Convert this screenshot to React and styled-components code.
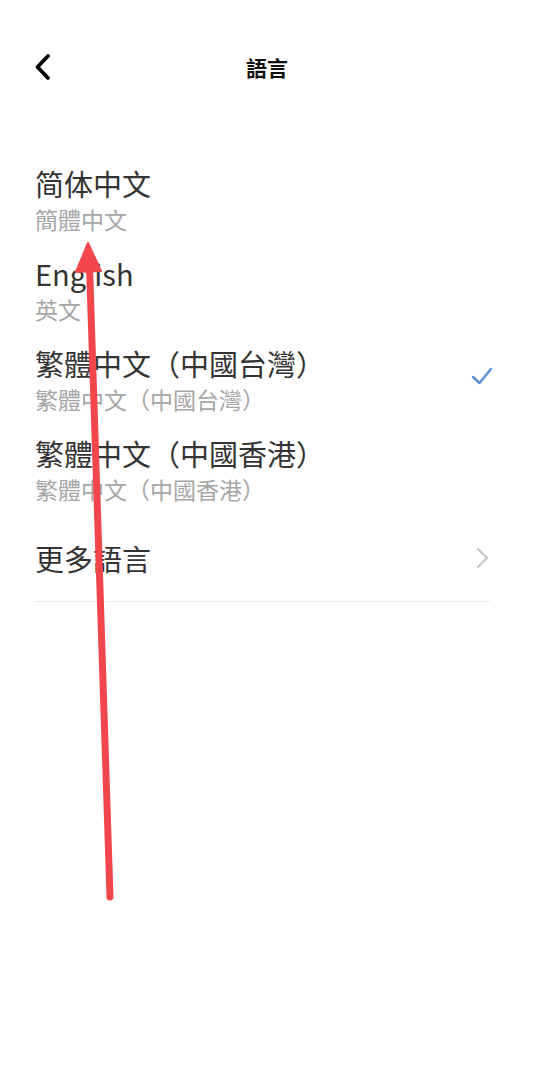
import React from 'react';
import styled, { createGlobalStyle } from 'styled-components';

const GlobalStyle = createGlobalStyle`
  html, body {
    margin: 0;
    padding: 0;
    background: #ffffff;
  }
  body {
    font-family: "Noto Sans CJK TC", "Noto Sans CJK SC", "Noto Sans", sans-serif;
    color: #333;
  }
`;

const Page = styled.div`
  position: relative;
  width: 534px;
  height: 1080px;
  background: #fff;
  overflow: hidden;
`;

const Header = styled.header`
  height: 134px;
  display: flex;
  align-items: center;
  justify-content: center;
  position: relative;
`;

const BackButton = styled.button`
  position: absolute;
  left: 30px;
  top: 50px;
  width: 28px;
  height: 34px;
  padding: 0;
  border: 0;
  background: none;
  cursor: pointer;
`;

const Title = styled.h1`
  margin: 0;
  font-size: 21px;
  line-height: 28px;
  font-weight: 700;
  color: #111;
`;

const List = styled.ul`
  list-style: none;
  margin: 0;
  padding: 20px 0 0;
`;

const Row = styled.li`
  display: flex;
  align-items: center;
  justify-content: space-between;
  margin: 0 44px 0 35px;
  padding: ${(p) => (p.$more ? '0' : '9px 0')};
  height: ${(p) => (p.$more ? '87px' : 'auto')};
  border-bottom: ${(p) => (p.$more ? '1px solid #ececec' : 'none')};
  cursor: pointer;
`;

const Labels = styled.div`
  display: flex;
  flex-direction: column;
`;

const Primary = styled.span`
  font-size: 29px;
  line-height: 40px;
  color: #333;
`;

const Secondary = styled.span`
  font-size: 23px;
  line-height: 32px;
  color: #a6a6a6;
`;

const CheckMark = styled.svg`
  margin-right: -3px;
  margin-top: -6px;
`;

const languages = [
  { name: '简体中文', native: '簡體中文' },
  { name: 'English', native: '英文' },
  { name: '繁體中文（中國台灣）', native: '繁體中文（中國台灣）', selected: true },
  { name: '繁體中文（中國香港）', native: '繁體中文（中國香港）' },
];

const Check = () => (
  <CheckMark width="22" height="20" viewBox="0 0 22 20">
    <path d="M2 11 L8.5 17 L20 3" fill="none" stroke="#5b8fd6" strokeWidth="2.4" strokeLinecap="round" strokeLinejoin="round" />
  </CheckMark>
);

const Chevron = () => (
  <svg width="14" height="22" viewBox="0 0 14 22">
    <path d="M2 2 L11 11 L2 20" fill="none" stroke="#c6c6c6" strokeWidth="2.2" strokeLinecap="round" strokeLinejoin="round" />
  </svg>
);

const Arrow = styled.svg`
  position: absolute;
  left: 0;
  top: 0;
  pointer-events: none;
`;

export default function App() {
  return (
    <Page>
      <GlobalStyle />
      <Header>
        <BackButton aria-label="back">
          <svg width="28" height="34" viewBox="0 0 28 34">
            <path d="M18 6 L7.5 17 L18 28" fill="none" stroke="#000" strokeWidth="3.8" strokeLinecap="round" strokeLinejoin="round" />
          </svg>
        </BackButton>
        <Title>語言</Title>
      </Header>
      <List>
        {languages.map((lang) => (
          <Row key={lang.name}>
            <Labels>
              <Primary>{lang.name}</Primary>
              <Secondary>{lang.native}</Secondary>
            </Labels>
            {lang.selected && <Check />}
          </Row>
        ))}
        <Row $more>
          <Primary>更多語言</Primary>
          <Chevron />
        </Row>
      </List>
      <Arrow width="534" height="1080" viewBox="0 0 534 1080">
        <line x1="89.5" y1="266" x2="110" y2="897" stroke="#f2464d" strokeWidth="7" strokeLinecap="round" />
        <path d="M88 243 L101 271 L76 272 Z" fill="#f2464d" stroke="#f2464d" strokeWidth="2" strokeLinejoin="round" />
      </Arrow>
    </Page>
  );
}
